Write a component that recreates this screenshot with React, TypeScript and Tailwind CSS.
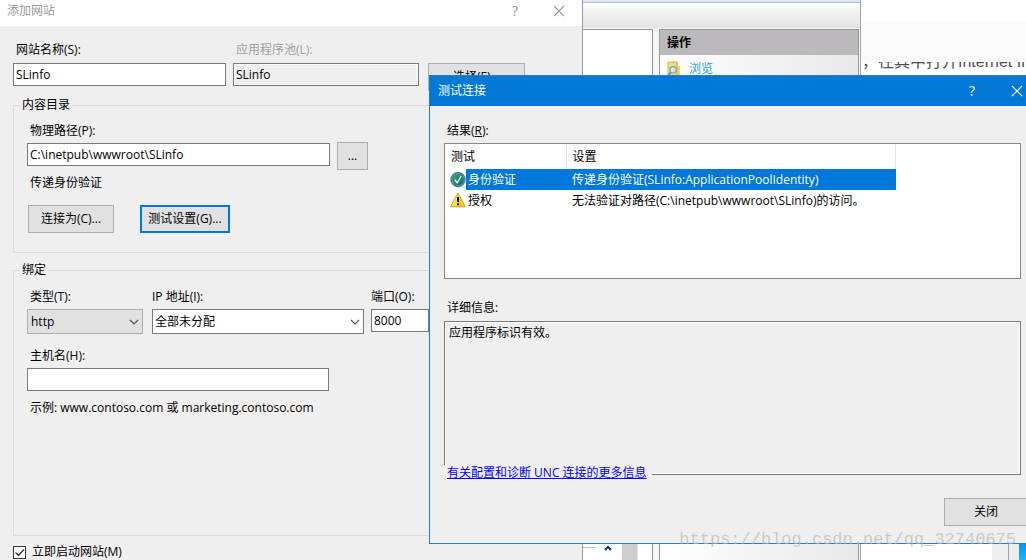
import React, { useState } from 'react';

const WindowCloseIcon = ({ className }: { className: string }) => (
  <svg viewBox="0 0 12 12" className={className} fill="none" stroke="currentColor" strokeWidth="1.1">
    <path d="M1 1l10 10M11 1L1 11" />
  </svg>
);

const Chevron = () => (
  <svg
    viewBox="0 0 10 6"
    className="pointer-events-none absolute right-1 top-2.5 h-1.5 w-2.5"
    fill="none"
    stroke="#555555"
    strokeWidth="1.2"
  >
    <path d="M1 1l4 4 4-4" />
  </svg>
);

const PassedIcon = () => (
  <svg viewBox="0 0 16 16" className="h-4 w-4 shrink-0">
    <defs>
      <linearGradient id="passed" x1="0" y1="0" x2="1" y2="1">
        <stop offset="0" stopColor="#35a56f" />
        <stop offset="1" stopColor="#08705a" />
      </linearGradient>
    </defs>
    <circle cx="8" cy="7.6" r="7.7" fill="#4377a6" />
    <circle cx="8" cy="7.6" r="6.6" fill="#5f94bd" />
    <circle cx="8" cy="7.6" r="5.7" fill="url(#passed)" />
    <path d="M4.8 7.6l2.4 3.2L11.2 4" fill="none" stroke="#ffffff" strokeWidth="1.4" />
  </svg>
);

const WarningIcon = () => (
  <svg viewBox="0 0 16 16" className="h-4 w-4 shrink-0">
    <path d="M8 0L15.5 13.8H.5z" fill="#fde047" stroke="#c9a227" strokeWidth="1" strokeLinejoin="round" />
    <path d="M8 2L13.8 13H8z" fill="#f5c800" />
    <path d="M8 4v5" stroke="#111111" strokeWidth="2" />
    <path d="M7 10.3h2v2H7z" fill="#111111" />
  </svg>
);

const BrowseIcon = () => (
  <svg viewBox="0 0 16 16" className="h-4 w-4 shrink-0">
    <path d="M2 1h9v13l-9 1z" fill="#f3dc7b" stroke="#d8b84c" strokeWidth="1" />
    <path d="M10 1h2v14h-2z" fill="#e3bf4e" />
    <path d="M12 5h2v9l-2 1z" fill="#f0d268" />
    <path d="M5 11l-3 4" stroke="#7d8288" strokeWidth="2" />
    <circle cx="7" cy="8.8" r="3.2" fill="#cfe9f7" stroke="#7b9db5" strokeWidth="1.2" />
  </svg>
);

const inputClass = 'h-[23px] min-w-0 border border-[#7a7a7a] bg-white px-0.5 outline-none';
const buttonClass = 'h-7 shrink-0 border border-[#adadad] bg-[#e1e1e1]';
const labelClass = 'pl-[3px] leading-4';

const BrowserPage = () => (
  <div className="absolute inset-0 bg-white">
    <div className="h-[22px]" />
    <div className="h-10 bg-[#fafafa]" />
    <div className="ml-[862px] h-3 overflow-hidden whitespace-nowrap">
      <p className="-mt-2.5 font-['Liberation_Sans','Noto_Sans_CJK_SC',sans-serif] text-base leading-5 text-[#4f4f4f]">
        ，在其中打开Internet In
      </p>
    </div>
  </div>
);

const ManagerWindow = () => (
  <div className="absolute inset-y-0 left-0 flex w-[861px] flex-col border-r border-[#a5a5a5] bg-[#f6f6f6]">
    <div className="h-[3px] shrink-0 border-b border-[#b3c0d8] bg-[#d9e6f3]" />
    <div className="mb-px h-[25px] shrink-0 bg-gradient-to-b from-[#fdfdfd] to-[#e4e2e3]" />
    <div className="flex min-h-0 flex-1 gap-1.5">
      <div className="flex flex-1 flex-col justify-end border-r border-t border-[#959a95] bg-white">
        <div className="flex h-4 justify-end">
          <div className="mt-[3px] h-px w-4 bg-[#b5bfe0]" />
          <svg viewBox="0 0 8 6" className="ml-2 mt-px h-1.5 w-2" fill="none" stroke="#003399" strokeWidth="2">
            <path d="M1 5l3-3 3 3" />
          </svg>
          <div className="ml-2.5 mr-3.5 w-4 border-r border-[#e5e5e5] bg-[#cdcdcd]" />
        </div>
      </div>
      <div className="mr-px w-[200px] border-x border-t border-[#959a95] bg-gradient-to-r from-white to-[#e8e8e8]">
        <h2 className="h-[25px] bg-[#bbb9bc] pl-[7px] font-bold leading-[25px]">操作</h2>
        <a href="#browse" className="flex items-center gap-[7px] px-1.5 py-1.5 text-[#3399dd]">
          <BrowseIcon />
          浏览
        </a>
      </div>
    </div>
  </div>
);

const DesktopStrip = () => (
  <div className="absolute bottom-0 right-0 flex h-4">
    <div className="w-4 bg-[#eeeeee]" />
    <div className="w-[11px] border-l border-[#a0a0a0] bg-[#eeeeee]" />
    <div className="w-[7px] bg-gradient-to-b from-[#0095f5] to-[#1cb4ff]" />
  </div>
);

const AddSiteDialog = () => {
  const [autoStart, setAutoStart] = useState(true);

  return (
    <section className="absolute inset-y-0 left-0 flex w-[583px] flex-col border-r border-[#9b9b9b] bg-[#efefef]">
      <header className="flex h-[26px] shrink-0 items-center bg-white pb-1 pl-[7px] pr-[17px] text-[#999999]">
        <h1 className="flex-1">添加网站</h1>
        <button className="mr-8 w-3 text-sm" aria-label="帮助">?</button>
        <button aria-label="关闭窗口">
          <WindowCloseIcon className="h-3 w-3" />
        </button>
      </header>

      <form className="px-[13px] pt-4">
        <div className="flex items-end gap-[7px]">
          <div className="flex w-[213px] flex-col gap-[5px] self-start">
            <label htmlFor="site" className={labelClass}>网站名称(S):</label>
            <input id="site" className={inputClass} defaultValue="SLinfo" />
          </div>
          <div className="flex w-[186px] flex-col gap-[5px] self-start">
            <label htmlFor="pool" className="pl-[3px] leading-4 text-[#a0a0a0]">应用程序池(L):</label>
            <input
              id="pool"
              className="h-[23px] min-w-0 border border-[#7a7a7a] bg-[#efefef] px-0.5 shadow-[inset_0_0_0_1px_#ffffff] outline-none"
              defaultValue="SLinfo"
              readOnly
            />
          </div>
          <button type="button" className={`${buttonClass} mt-[21px] ml-0.5 w-[97px]`}>选择(E)...</button>
        </div>

        <fieldset className="mt-1.5 border border-[#dcdcdc] pb-[19px] pl-[13px]">
          <legend className="-ml-[7px] px-0.5 leading-4">内容目录</legend>
          <div className="flex flex-col pt-2.5">
            <label htmlFor="path" className={labelClass}>物理路径(P):</label>
            <div className="mt-[3px] flex items-start gap-[7px]">
              <input id="path" className={`${inputClass} mt-px w-[303px]`} defaultValue="C:\inetpub\wwwroot\SLinfo" />
              <button type="button" className={`${buttonClass} w-[31px]`}>...</button>
            </div>
            <p className="mt-[5px] pl-[3px] leading-4">传递身份验证</p>
            <div className="mt-3.5 flex gap-[26px] pl-px">
              <button type="button" className={`${buttonClass} w-[86px]`}>连接为(C)...</button>
              <button type="button" className="h-7 w-[90px] border-2 border-[#0078d7] bg-[#e1e1e1]">
                测试设置(G)...
              </button>
            </div>
          </div>
        </fieldset>

        <fieldset className="mt-[9px] border border-[#dcdcdc] pb-[119px] pl-[13px]">
          <legend className="-ml-[7px] px-0.5 leading-4">绑定</legend>
          <div className="flex pt-[11px]">
            <div className="mr-[9px] flex w-[116px] flex-col gap-1">
              <label htmlFor="type" className={labelClass}>类型(T):</label>
              <div className="relative">
                <select id="type" className="h-[25px] w-full appearance-none border border-[#adadad] bg-[#e1e1e1] px-[3px]">
                  <option>http</option>
                </select>
                <Chevron />
              </div>
            </div>
            <div className="mr-[7px] flex w-[212px] flex-col gap-1">
              <label htmlFor="ip" className="leading-4">IP 地址(I):</label>
              <div className="relative">
                <select id="ip" className="h-[25px] w-full appearance-none border border-[#7a7a7a] bg-white px-0.5">
                  <option>全部未分配</option>
                </select>
                <Chevron />
              </div>
            </div>
            <div className="flex w-[58px] flex-col gap-1">
              <label htmlFor="port" className="leading-4">端口(O):</label>
              <input id="port" className={inputClass} defaultValue="8000" />
            </div>
          </div>
          <div className="mt-3.5 flex flex-col">
            <label htmlFor="host" className={labelClass}>主机名(H):</label>
            <input id="host" className={`${inputClass} mt-1 w-[302px]`} />
            <p className="mt-[9px] pl-[3px] leading-4">示例: www.contoso.com 或 marketing.contoso.com</p>
          </div>
        </fieldset>

        <label className="mt-2 flex items-center gap-1.5 leading-4">
          <span className="relative flex">
            <input
              type="checkbox"
              checked={autoStart}
              onChange={(e) => setAutoStart(e.target.checked)}
              className="h-[13px] w-[13px] appearance-none border border-[#333333] bg-white"
            />
            {autoStart && (
              <svg
                viewBox="0 0 13 13"
                className="pointer-events-none absolute inset-0 h-[13px] w-[13px]"
                fill="none"
                stroke="#333333"
                strokeWidth="1.3"
              >
                <path d="M2.5 6.5l3 3 5.5-6" />
              </svg>
            )}
          </span>
          立即启动网站(M)
        </label>
      </form>
    </section>
  );
};

const results = [
  { name: '身份验证', detail: '传递身份验证(SLinfo:ApplicationPoolIdentity)', passed: true },
  { name: '授权', detail: '无法验证对路径(C:\\inetpub\\wwwroot\\SLinfo)的访问。', passed: false }
];

const TestConnectionDialog = () => (
  <section className="absolute -right-2.5 left-[429px] top-[75px] border border-[#1c7fd6] bg-[#efefef]">
    <header className="flex h-[30px] items-center bg-[#0078d7] pl-2 pr-3 text-white">
      <h1 className="flex-1">测试连接</h1>
      <button className="mr-[33px] w-3 text-sm" aria-label="帮助">?</button>
      <button aria-label="关闭窗口">
        <WindowCloseIcon className="h-3 w-3" />
      </button>
    </header>

    <div className="px-3.5 pb-[17px] pt-[17px]">
      <h2 className={labelClass}>结果(<u>R</u>):</h2>
      <div className="mt-1 h-[136px] border border-[#828790] bg-white">
        <table className="w-[451px] table-fixed border-collapse text-left">
          <thead>
            <tr className="h-[25px]">
              <th className="w-[121px] border-r border-[#e5e5e5] pl-1.5 font-normal">测试</th>
              <th className="border-r border-[#e5e5e5] pl-1.5 font-normal">设置</th>
            </tr>
          </thead>
          <tbody>
            {results.map((row) => (
              <tr key={row.name} className={row.passed ? 'h-[21px] text-white' : 'h-[21px]'}>
                <td className="p-0">
                  <div className="flex h-[21px] items-center pl-[5px]">
                    {row.passed ? <PassedIcon /> : <WarningIcon />}
                    <span className={`flex-1 pl-0.5 leading-[21px] ${row.passed ? 'bg-[#0078d7]' : ''}`}>{row.name}</span>
                  </div>
                </td>
                <td className={`whitespace-nowrap p-0 pl-1.5 ${row.passed ? 'bg-[#0078d7]' : ''}`}>{row.detail}</td>
              </tr>
            ))}
          </tbody>
        </table>
      </div>

      <label htmlFor="details" className="mt-[21px] block pl-[3px] leading-4">详细信息:</label>
      <div className="relative mt-[5px]">
        <textarea
          id="details"
          readOnly
          className="block h-[154px] w-full resize-none border border-[#7a7a7a] bg-[#efefef] px-1 py-[3px] leading-4 shadow-[inset_0_0_0_1px_#ffffff] outline-none"
          defaultValue="应用程序标识有效。"
        />
        <a href="#unc" className="absolute -bottom-1.5 left-0 bg-[#efefef] pl-[3px] pr-[5px] leading-4 text-[#0000ff] underline">
          有关配置和诊断 UNC 连接的更多信息
        </a>
      </div>

      <div className="-mr-[7px] mt-[23px] flex justify-end">
        <button className={`${buttonClass} w-[84px]`}>关闭</button>
      </div>
    </div>
  </section>
);

const App = () => (
  <main className="relative h-screen overflow-hidden font-['Open_Sans','Noto_Sans_CJK_SC',sans-serif] text-xs text-black">
    <BrowserPage />
    <ManagerWindow />
    <DesktopStrip />
    <AddSiteDialog />
    <TestConnectionDialog />
    <p className="pointer-events-none absolute bottom-2 right-2.5 font-['Liberation_Mono',monospace] text-[17px] text-[#b9b9b4]/70">
      https://blog.csdn.net/qq_32740675
    </p>
  </main>
);

export default App;
